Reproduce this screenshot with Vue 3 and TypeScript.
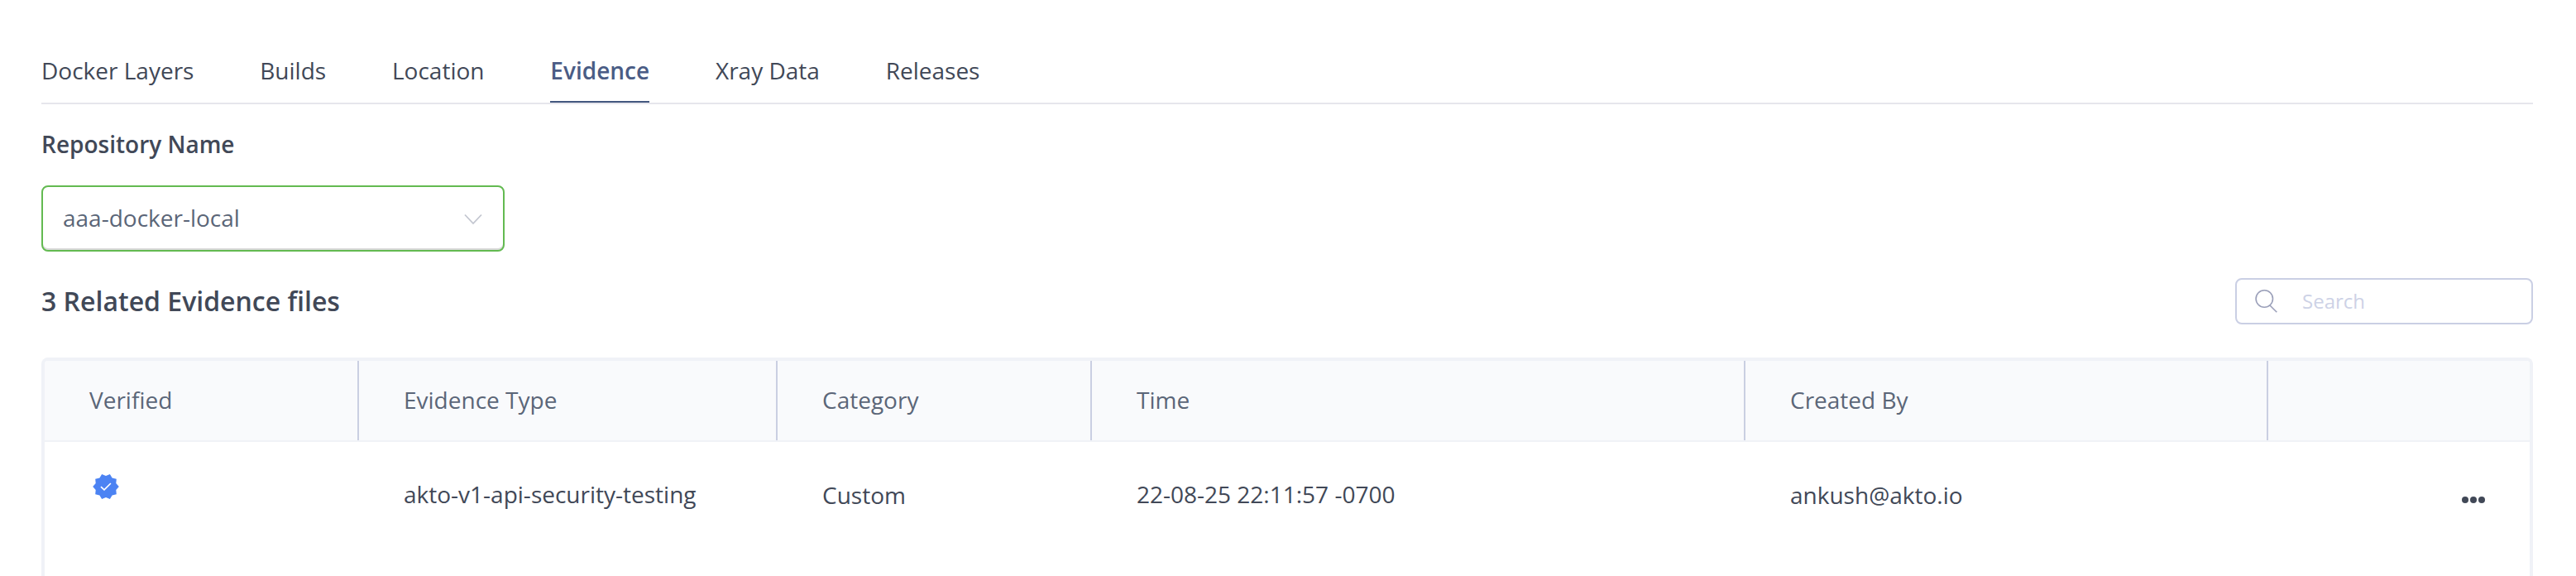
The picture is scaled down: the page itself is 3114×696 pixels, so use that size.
<script setup lang="ts">
const tabs = ['Docker Layers', 'Builds', 'Location', 'Evidence', 'Xray Data', 'Releases']
const activeTab = 'Evidence'
const columns = ['Verified', 'Evidence Type', 'Category', 'Time', 'Created By', '']
const rows = [
  {
    type: 'akto-v1-api-security-testing',
    category: 'Custom',
    time: '22-08-25 22:11:57 -0700',
    createdBy: 'ankush@akto.io',
  },
]
</script>

<template>
  <main class="page">
    <nav class="tabs">
      <a v-for="tab in tabs" :key="tab" class="tab" :class="{ active: tab === activeTab }">{{ tab }}</a>
    </nav>

    <div class="label">Repository Name</div>
    <div class="select">
      <span>aaa-docker-local</span>
      <svg class="chevron" width="22" height="14" viewBox="0 0 22 14" fill="none">
        <path d="M1 1.5 11 12 21 1.5" stroke="#c3c6d0" stroke-width="1.8" />
      </svg>
    </div>

    <div class="toolbar">
      <h2 class="title">3 Related Evidence files</h2>
      <div class="search">
        <svg class="lens" width="28" height="30" viewBox="0 0 28 30" fill="none" stroke="#9a9fb9" stroke-width="1.6">
          <circle cx="12.3" cy="12" r="10.2" />
          <path d="M19 20 27.3 28.2" />
        </svg>
        <span>Search</span>
      </div>
    </div>

    <div class="table">
      <div class="grid head">
        <div v-for="(column, i) in columns" :key="i" class="th">{{ column }}</div>
      </div>
      <div v-for="row in rows" :key="row.time" class="grid row">
        <div class="td verified">
          <svg width="32" height="32" viewBox="0.86 0.86 22.28 22.28">
            <path
              fill="#4c83f3"
              d="M23 12l-2.44-2.79.34-3.69-3.61-.82-1.89-3.2L12 2.96 8.6 1.5 6.71 4.69 3.1 5.5l.34 3.7L1 12l2.44 2.79-.34 3.7 3.61.82L8.6 22.5l3.4-1.47 3.4 1.46 1.89-3.19 3.61-.82-.34-3.69L23 12z"
            />
            <path d="M7.8 12.1 10.6 14.7 16.1 9.2" fill="none" stroke="#fff" stroke-width="1.15" />
          </svg>
        </div>
        <div class="td">{{ row.type }}</div>
        <div class="td low">{{ row.category }}</div>
        <div class="td">{{ row.time }}</div>
        <div class="td low">{{ row.createdBy }}</div>
        <div class="td actions"><i /><i /><i /></div>
      </div>
    </div>
  </main>
</template>

<style>
body {
  margin: 0;
  background: #fff;
}
</style>

<style scoped>
.page {
  box-sizing: border-box;
  height: 696px;
  padding: 66px 52px 0 50px;
  overflow: hidden;
  display: flex;
  flex-direction: column;
  background: #fff;
  color: #414857;
  font-family: 'Open Sans', 'Noto Sans', sans-serif;
  font-size: 28px;
  line-height: 38px;
}
.tabs {
  display: flex;
  gap: 79.85px;
  border-bottom: 2px solid #e6e6ec;
}
.tab {
  padding-bottom: 18px;
  border-bottom: 2px solid transparent;
}
.tab.active {
  font-weight: 600;
  color: #4a5c85;
  border-bottom-color: #43577f;
}
.label {
  margin-top: 29px;
  font-weight: 600;
}
.select {
  box-sizing: border-box;
  width: 560px;
  height: 80px;
  margin-top: 31px;
  padding: 0 25px 2px 24px;
  border: 2px solid #63ba51;
  border-radius: 8px;
  box-shadow: inset 0 -2px 0 #d9d9d9;
  display: flex;
  align-items: center;
  justify-content: space-between;
  color: #5b6678;
}
.chevron {
  margin-top: 3px;
}
.toolbar {
  height: 56px;
  margin-top: 32px;
  display: flex;
  align-items: center;
  justify-content: space-between;
}
.title {
  margin: 0;
  font-size: 32px;
  line-height: 44px;
  font-weight: 600;
}
.search {
  box-sizing: border-box;
  width: 360px;
  height: 56px;
  padding: 0 0 1px 21px;
  border: 2px solid #cacfe4;
  border-radius: 8px;
  display: flex;
  align-items: center;
  font-size: 24px;
  line-height: 33px;
  color: #cdd2e6;
}
.lens {
  margin-right: 30px;
}
.table {
  flex: 1;
  margin-top: 40px;
  border: 4px solid #f0f2f7;
  border-bottom: 0;
  border-radius: 8px 8px 0 0;
}
.grid {
  display: grid;
  grid-template-columns: 380px 506px 380px 790px 632px 1fr;
}
.head {
  height: 96px;
  background: #f9fafc;
  border-bottom: 2px solid #f0f2f7;
  border-radius: 4px 4px 0 0;
  color: #5b6678;
}
.th {
  padding: 28px 0 0 54px;
  border-right: 2px solid #cacfe2;
}
.th:last-child {
  border-right: 0;
}
.td {
  padding: 44px 0 0 54px;
}
.td.low {
  padding-top: 45px;
}
.td.verified {
  padding: 38px 0 0 58px;
  line-height: 0;
}
.td.actions {
  display: flex;
  justify-content: flex-end;
  gap: 2px;
  padding: 66px 54px 0 0;
}
.actions i {
  width: 8px;
  height: 8px;
  border-radius: 50%;
  background: #414857;
}
</style>
